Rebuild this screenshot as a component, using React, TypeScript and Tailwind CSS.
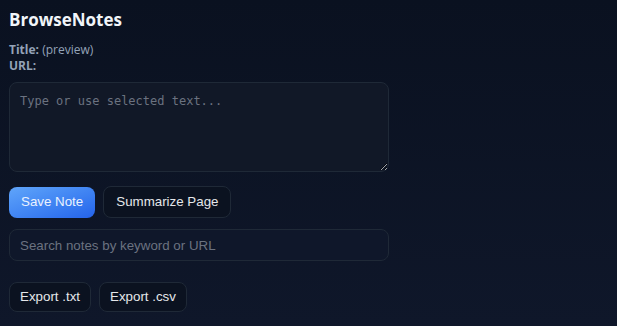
import { useState } from "react";

const sans = "font-['Open_Sans',sans-serif]";
const btnFont = "font-['Liberation_Sans',Arial,sans-serif] text-[13.333px] leading-[16px]";

export default function App() {
  const [note, setNote] = useState("");
  const [query, setQuery] = useState("");

  return (
    <div className="min-h-screen bg-gradient-to-b from-[#0a1120] to-[#0f172a] px-[9px] pt-[8px] text-[#e5e7eb]">
      <div className="w-[380px]">
        <h1 className={`${sans} text-[17px] font-bold leading-[24px] text-[#f1f5f9]`}>BrowseNotes</h1>

        <div className={`${sans} mt-[10px] text-[12px] leading-[16px] text-[#94a3b8]`}>
          <div>
            <span className="font-bold">Title:</span> <span>(preview)</span>
          </div>
          <div>
            <span className="font-bold">URL:</span>
          </div>
        </div>

        <textarea
          value={note}
          onChange={(e) => setNote(e.target.value)}
          placeholder="Type or use selected text..."
          className="mt-[8px] block h-[90px] w-full rounded-[8px] border border-[#1f2937] bg-[#111827] px-[10px] py-[10px] font-['DejaVu_Sans_Mono',monospace] text-[12px] leading-[16px] text-[#e5e7eb] outline-none placeholder:text-[#6b7280]"
        />

        <div className="mt-[14px] flex items-center gap-[8px]">
          <button
            className={`${btnFont} h-[31px] rounded-[8px] bg-gradient-to-br from-[#60a5fa] to-[#2563eb] px-3 text-[#eaf2ff]`}
          >
            Save Note
          </button>
          <button
            className={`${btnFont} h-[32px] rounded-[8px] border border-[#1f2937] bg-[#0b1220] px-3 text-[#e5e7eb]`}
          >
            Summarize Page
          </button>
        </div>

        <input
          value={query}
          onChange={(e) => setQuery(e.target.value)}
          placeholder="Search notes by keyword or URL"
          className={`${btnFont} mt-[11px] block h-[32px] w-full rounded-[8px] border border-[#1f2937] bg-[#0f172a] px-[10px] text-[#e5e7eb] outline-none placeholder:text-[#6b7280]`}
        />

        <div className="mt-[21px] flex items-center gap-[8px]">
          <button
            className={`${btnFont} h-[30px] rounded-[8px] border border-[#1f2937] bg-[#0b1220] px-[10px] text-[#e5e7eb]`}
          >
            Export .txt
          </button>
          <button
            className={`${btnFont} h-[30px] rounded-[8px] border border-[#1f2937] bg-[#0b1220] px-[10px] text-[#e5e7eb]`}
          >
            Export .csv
          </button>
        </div>
      </div>
    </div>
  );
}
